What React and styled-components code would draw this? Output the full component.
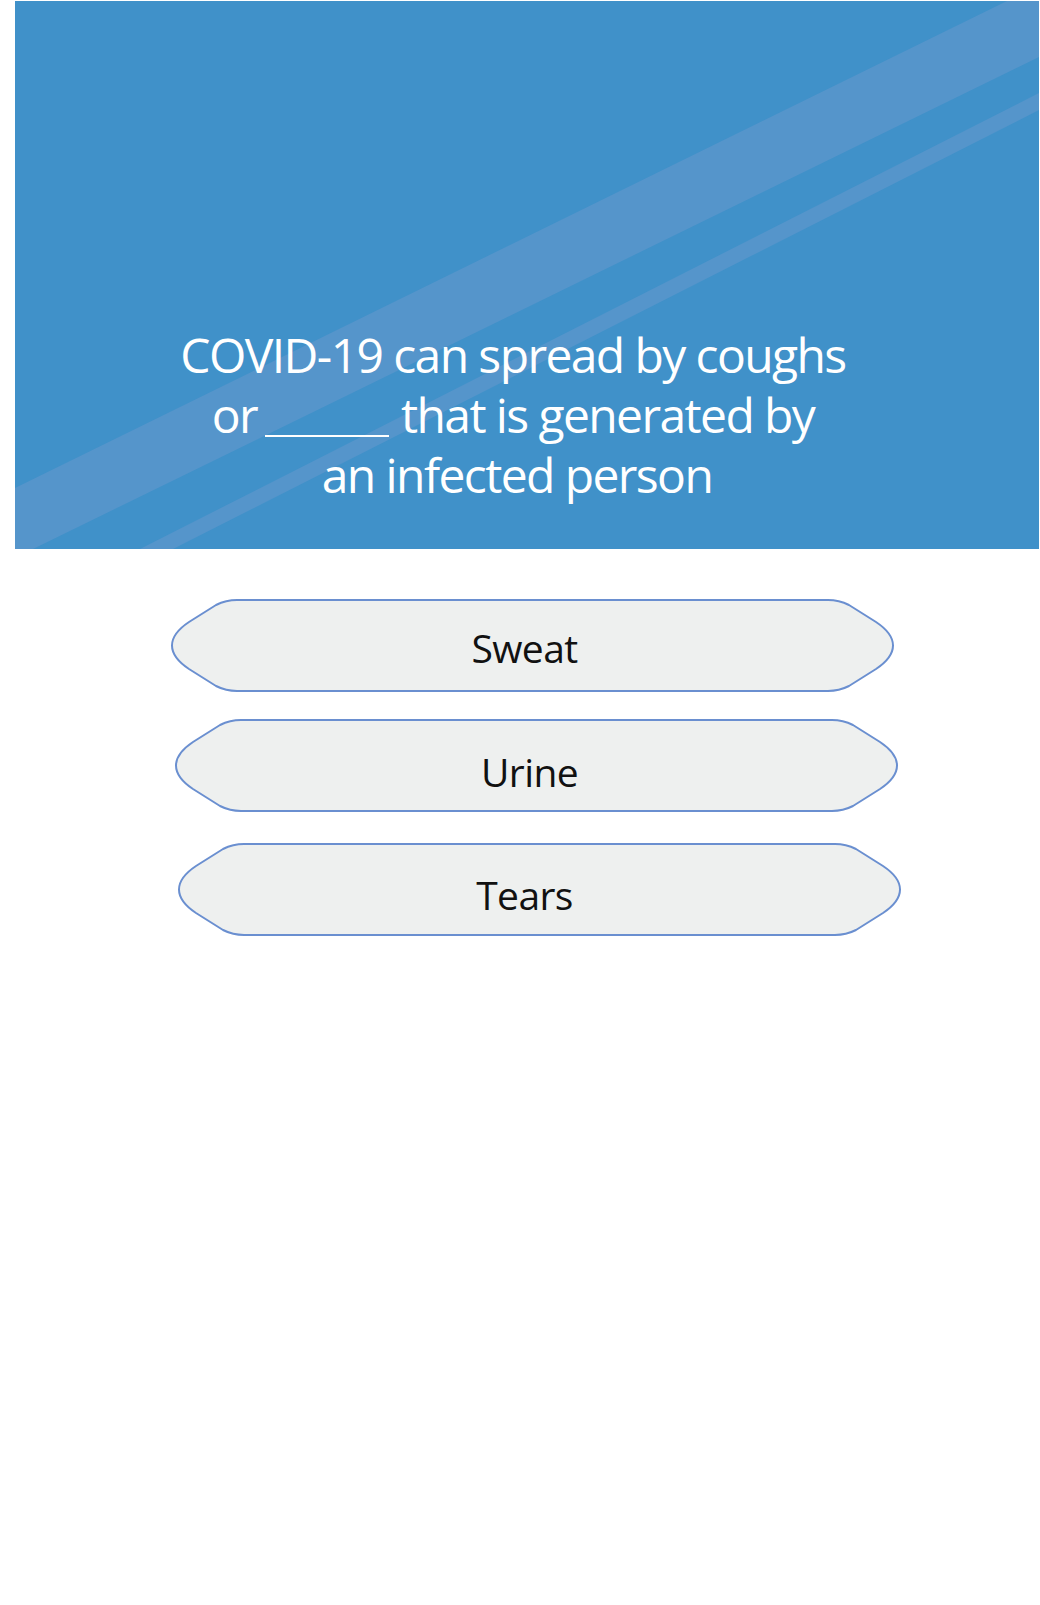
import React from "react";
import styled, { createGlobalStyle } from "styled-components";

const GlobalStyle = createGlobalStyle`
  html, body {
    margin: 0;
    padding: 0;
    background: #ffffff;
  }
  body {
    font-family: "Open Sans", "Noto Sans", sans-serif;
  }
`;

const Page = styled.div`
  width: 1040px;
  min-height: 1605px;
  padding-top: 1px;
  box-sizing: border-box;
`;

const QuestionPanel = styled.div`
  position: relative;
  margin-left: 15px;
  width: 1024px;
  height: 548px;
  background: #4091c9;
  overflow: hidden;
  display: flex;
  flex-direction: column;
  justify-content: flex-end;
  padding: 0 28px 44px 0;
  box-sizing: border-box;
`;

const Stripes = styled.svg`
  position: absolute;
  left: 0;
  top: 0;
  width: 100%;
  height: 100%;
`;

const QuestionText = styled.h1`
  position: relative;
  margin: 0;
  font-size: 48px;
  line-height: 60px;
  font-weight: 400;
  letter-spacing: -1.6px;
  color: #ffffff;
  text-align: center;
`;

const Line = styled.span`
  display: block;
  padding-left: ${(p) => p.shift || 0}px;
`;

const Blank = styled.span`
  display: inline-block;
  width: 124px;
  height: 2px;
  background: #ffffff;
  vertical-align: -4px;
  margin: 0 12px 0 8px;
`;

const Answers = styled.div`
  display: flex;
  flex-direction: column;
  margin-top: 50px;
`;

const AnswerButton = styled.div`
  position: relative;
  width: 723px;
  height: 93px;
  margin-left: ${(p) => p.left}px;
  margin-top: ${(p) => p.gap}px;
  display: flex;
  align-items: center;
  justify-content: center;
  cursor: pointer;
`;

const Shape = styled.svg`
  position: absolute;
  left: 0;
  top: 0;
  width: 100%;
  height: 100%;
`;

const Label = styled.span`
  position: relative;
  font-size: 39px;
  line-height: 1;
  letter-spacing: -0.6px;
  color: #111111;
  padding-top: ${(p) => p.drop}px;
  padding-right: ${(p) => p.nudge * 2}px;
`;

const answers = [
  { text: "Sweat", left: 171, gap: 0, nudge: 8, drop: 3 },
  { text: "Urine", left: 175, gap: 27, nudge: 7, drop: 12 },
  { text: "Tears", left: 178, gap: 31, nudge: 15, drop: 10 },
];

const buttonPath =
  "M 66 1 C 57 1 51 3 45 6 L 18 23 C 6 31 1 39 1 46.5 C 1 54 6 62 18 70 L 45 87 C 51 90 57 92 66 92 " +
  "L 657 92 C 666 92 672 90 678 87 L 705 70 C 717 62 722 54 722 46.5 C 722 39 717 31 705 23 L 678 6 C 672 3 666 1 657 1 Z";

const App = () => {
  return (
    <Page>
      <GlobalStyle />
      <QuestionPanel>
        <Stripes viewBox="0 0 1024 548" preserveAspectRatio="none">
          <polygon
            points="0,487 992,0 1024,0 1024,56 18,548 0,548"
            fill="#5595cb"
          />
          <polygon points="1024,92 125,548 158,548 1024,109" fill="#5595cb" />
        </Stripes>
        <QuestionText>
          <Line>COVID-19 can spread by coughs</Line>
          <Line>
            or<Blank />that is generated by
          </Line>
          <Line shift={8}>an infected person</Line>
        </QuestionText>
      </QuestionPanel>
      <Answers>
        {answers.map((a) => (
          <AnswerButton key={a.text} left={a.left} gap={a.gap}>
            <Shape viewBox="0 0 723 93" preserveAspectRatio="none">
              <path
                d={buttonPath}
                fill="#eef0ef"
                stroke="#6a8fd0"
                strokeWidth="2"
              />
            </Shape>
            <Label nudge={a.nudge} drop={a.drop}>
              {a.text}
            </Label>
          </AnswerButton>
        ))}
      </Answers>
    </Page>
  );
};

export default App;
